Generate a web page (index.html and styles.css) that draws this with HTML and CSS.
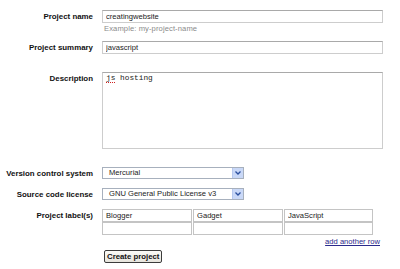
FILE: index.html
```html
<!DOCTYPE html>
<html>
<head>
    <title>Create a new project</title>
    <link rel="stylesheet" href="styles.css">
</head>
<body>
    <form class="project-form">
        <div class="row row-name">
            <label class="label" for="name">Project name</label>
            <div class="field">
                <input type="text" id="name" class="text-input" value="creatingwebsite">
                <div class="hint">Example: my-project-name</div>
            </div>
        </div>

        <div class="row row-summary">
            <label class="label" for="summary">Project summary</label>
            <div class="field">
                <input type="text" id="summary" class="text-input" value="javascript">
            </div>
        </div>

        <div class="row row-description">
            <label class="label" for="description">Description</label>
            <div class="field">
                <div class="textarea" id="description"><span class="misspelled">js</span> hosting</div>
            </div>
        </div>

        <div class="row row-vcs">
            <label class="label">Version control system</label>
            <div class="field">
                <div class="select">
                    <span class="select-value">Mercurial</span>
                    <span class="select-arrow">
                        <svg width="6" height="4" viewBox="0 0 6 4"><path d="M0.5 0.5 L3 3 L5.5 0.5" fill="none" stroke="#2b4f9e" stroke-width="1.3"/></svg>
                    </span>
                </div>
            </div>
        </div>

        <div class="row row-license">
            <label class="label">Source code license</label>
            <div class="field">
                <div class="select">
                    <span class="select-value">GNU General Public License v3</span>
                    <span class="select-arrow">
                        <svg width="6" height="4" viewBox="0 0 6 4"><path d="M0.5 0.5 L3 3 L5.5 0.5" fill="none" stroke="#2b4f9e" stroke-width="1.3"/></svg>
                    </span>
                </div>
            </div>
        </div>

        <div class="row row-labels">
            <label class="label">Project label(s)</label>
            <div class="field">
                <div class="label-grid">
                    <input type="text" class="label-input" value="Blogger">
                    <input type="text" class="label-input" value="Gadget">
                    <input type="text" class="label-input" value="JavaScript">
                    <input type="text" class="label-input" value="">
                    <input type="text" class="label-input" value="">
                    <input type="text" class="label-input" value="">
                </div>
                <div class="add-row"><a href="#">add another row</a></div>
            </div>
        </div>

        <div class="row row-submit">
            <span class="label"></span>
            <div class="field">
                <button type="button" class="create-button">Create project</button>
            </div>
        </div>
    </form>
</body>
</html>
```

FILE: styles.css
```css
body {
    margin: 0;
    padding: 10px 0 0 0;
    background: #ffffff;
    font-family: "Liberation Sans", Arial, sans-serif;
    font-size: 7.6px;
    color: #000;
}
.project-form {
    width: 383px;
}
.row {
    display: grid;
    grid-template-columns: 93px 281px;
    column-gap: 9px;
}
.label {
    text-align: right;
    font-weight: bold;
    font-size: 7.9px;
    line-height: 13px;
    color: #111;
}
.row-summary { margin-top: 8px; }
.row-description { margin-top: 18px; }
.row-vcs { margin-top: 18px; }
.row-license { margin-top: 8px; }
.row-labels { margin-top: 8px; }
.row-submit { margin-top: 3px; }

.text-input {
    display: block;
    box-sizing: border-box;
    width: 281px;
    height: 13px;
    margin: 0;
    padding: 0 3px;
    border: 1px solid #cdcdcd;
    border-top-color: #a9a9a9;
    font-family: inherit;
    font-size: 7.6px;
    color: #222;
    background: #fff;
}
.hint {
    margin: 1px 0 0 2px;
    line-height: 9px;
    color: #8a8a8a;
    letter-spacing: 0.1px;
}
.textarea {
    box-sizing: border-box;
    width: 281px;
    height: 77px;
    padding: 1px 3px;
    border: 1px solid #cdcdcd;
    border-top-color: #a9a9a9;
    font-family: "Liberation Mono", "Courier New", monospace;
    font-size: 7.8px;
    line-height: 9px;
    color: #222;
}
.misspelled {
    border-bottom: 1px dotted #d02020;
}
.select {
    box-sizing: border-box;
    display: flex;
    align-items: stretch;
    width: 142px;
    height: 12px;
    border: 1px solid #a7b0bd;
    background: #fff;
}
.select-value {
    flex: 1;
    padding-left: 6px;
    line-height: 10px;
    color: #222;
    white-space: nowrap;
    overflow: hidden;
}
.select-arrow {
    display: flex;
    align-items: center;
    justify-content: center;
    width: 10px;
    background: #c9d8f7;
    border-left: 1px solid #b6c8ee;
}
.label-grid {
    display: grid;
    grid-template-columns: 90px 90px 89px;
    column-gap: 1px;
}
.label-input {
    box-sizing: border-box;
    height: 13px;
    margin: 0;
    padding: 0 3px;
    border: 1px solid #c4c4c4;
    font-family: inherit;
    font-size: 7.6px;
    color: #222;
    background: #fff;
}
.add-row {
    text-align: right;
    padding-right: 3px;
    margin-top: 2px;
    line-height: 10px;
}
.add-row a {
    color: #2a2a8c;
    text-decoration: underline;
}
.create-button {
    margin-left: 2px;
    height: 13px;
    padding: 0 2px;
    border: 1px solid #3c3c3c;
    border-radius: 2px;
    background: linear-gradient(#fbfbf8, #e6e4dc);
    font-family: inherit;
    font-weight: bold;
    font-size: 7.8px;
    line-height: 11px;
    color: #111;
}
```
